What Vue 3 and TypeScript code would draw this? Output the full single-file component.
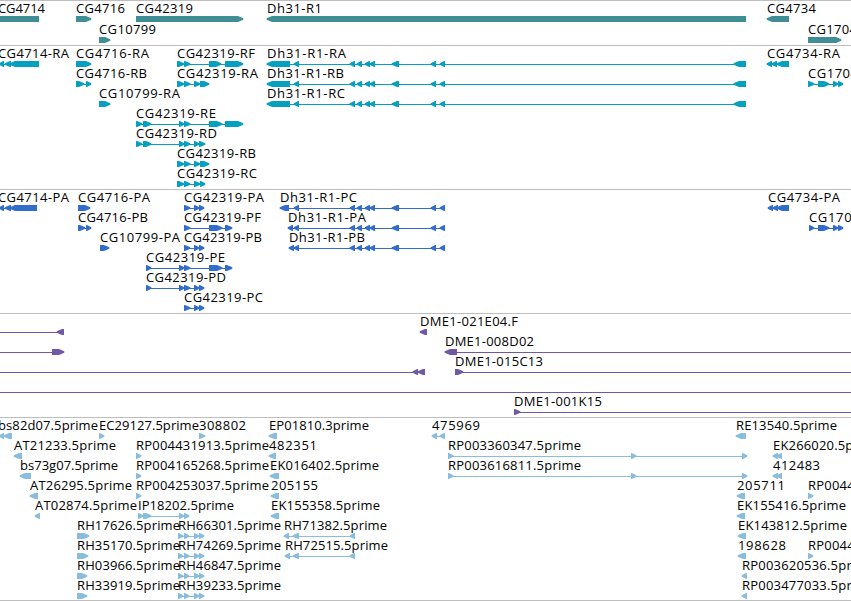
<script setup lang="ts">
type Feature = {
  label: string
  x: number
  y: number
  width?: number
  dir: 1 | -1
  blocks: number[][]
  line?: number[]
}
type Track = { id: string; height: number; color: string; features: Feature[] }

const f = (label: string, x: number, y: number, width: number, dir: 1 | -1, blocks: number[][], line?: number[]): Feature =>
  ({ label, x, y, width, dir, blocks, line })

const dhExons = [[350, 355], [357, 362], [365, 370], [370, 375], [392, 399], [431, 436], [440, 445]]
const dhRna = [[267, 290], [294, 299], ...dhExons, [734, 746]]
const refRna = [[177, 184], [184, 190], [209, 221], [225, 243]]
const shortRna = [[177, 184], [184, 190], [194, 200], [200, 209]]
const tinyRna = [[177, 184], [184, 190], [194, 200], [200, 205]]
const rhExons = [[178, 183], [184, 189], [194, 199], [199, 204]]

const tracks: Track[] = [
  {
    id: 'gene', height: 45, color: '#3f8e95', features: [
      f('CG4714', -2, 13, 47, -1, [[-6, 39]]),
      f('CG4716', 76, 13, 49, 1, [[76, 91]]),
      f('CG42319', 136, 13, 57, 1, [[136, 243]]),
      f('CG10799', 99, 34, 57, 1, [[99, 110]]),
      f('Dh31-R1', 267, 13, 55, -1, [[267, 746]]),
      f('CG4734', 767, 13, 49, -1, [[767, 789]]),
      f('CG1704', 808, 34, 49, 1, [[808, 841]]),
    ],
  },
  {
    id: 'mrna', height: 144, color: '#059fc0', features: [
      f('CG4714-RA', -2, 13, 71, -1, [[-1, 4], [5, 11], [10, 39]]),
      f('CG4716-RA', 76, 13, 73, 1, [[76, 91]]),
      f('CG4716-RB', 76, 33, 71, 1, [[76, 84], [86, 91]]),
      f('CG10799-RA', 99, 53, 81, 1, [[99, 110]]),
      f('CG42319-RF', 177, 13, 78, 1, refRna),
      f('CG42319-RA', 177, 33, 81, 1, shortRna),
      f('CG42319-RE', 136, 73, 80, 1, [[136, 142], [143, 151], [179, 184], [184, 190], [209, 222], [225, 243]]),
      f('CG42319-RD', 136, 93, 81, 1, [[136, 142], [143, 151], [179, 184], [184, 190], [194, 199], [199, 205]]),
      f('CG42319-RB', 177, 113, 79, 1, shortRna),
      f('CG42319-RC', 177, 133, 80, 1, tinyRna),
      f('Dh31-R1-RA', 267, 13, 79, -1, dhRna),
      f('Dh31-R1-RB', 267, 33, 77, -1, dhRna),
      f('Dh31-R1-RC', 267, 53, 78, -1, dhRna),
      f('CG4734-RA', 767, 13, 73, -1, [[767, 772], [772, 777], [777, 789]]),
      f('CG1704-RA', 808, 33, 72, 1, [[808, 814], [818, 829], [833, 838], [838, 843]]),
    ],
  },
  {
    id: 'protein', height: 124, color: '#336dcc', features: [
      f('CG4714-PA', -2, 13, 71, -1, [[-1, 4], [5, 11], [10, 37]]),
      f('CG4716-PA', 78, 13, 72, 1, [[78, 90]]),
      f('CG4716-PB', 78, 33, 70, 1, [[78, 85], [86, 91]]),
      f('CG10799-PA', 100, 53, 80, 1, [[100, 109]]),
      f('CG42319-PA', 184, 13, 80, 1, [[184, 190], [194, 199], [199, 204]]),
      f('CG42319-PF', 184, 33, 77, 1, [[184, 190], [209, 222], [225, 232]]),
      f('CG42319-PB', 184, 53, 78, 1, [[184, 190], [194, 199], [199, 204]]),
      f('CG42319-PE', 146, 73, 79, 1, [[146, 151], [179, 184], [184, 190], [209, 222], [225, 232]]),
      f('CG42319-PD', 146, 93, 80, 1, [[146, 151], [179, 184], [184, 190], [194, 199], [199, 204]]),
      f('CG42319-PC', 184, 113, 79, 1, [[184, 190], [194, 199], [199, 204]]),
      f('Dh31-R1-PC', 280, 13, 77, -1, [[280, 289], [294, 299], ...dhExons]),
      f('Dh31-R1-PA', 288, 33, 78, -1, [[288, 293], [294, 299], ...dhExons]),
      f('Dh31-R1-PB', 289, 53, 76, -1, [[289, 294], [294, 299], ...dhExons]),
      f('CG4734-PA', 768, 13, 72, -1, [[768, 773], [773, 778], [777, 789]]),
      f('CG1704-PA', 809, 33, 73, 1, [[809, 814], [818, 829], [833, 838], [838, 843]]),
    ],
  },
  {
    id: 'bac', height: 104, color: '#7158a5', features: [
      f('', 0, 13, 0, -1, [[57, 64]], [0, 64]),
      f('', 0, 33, 0, 1, [[52, 64]], [0, 64]),
      f('', 0, 53, 0, -1, [[413, 418], [418, 425]], [0, 425]),
      f('', 0, 73, 0, 1, [], [0, 851]),
      f('DME1-021E04.F', 420, 13, 98, -1, [[420, 427]]),
      f('DME1-008D02', 445, 33, 89, -1, [[445, 457]], [445, 851]),
      f('DME1-015C13', 455, 53, 88, 1, [[455, 463]], [455, 851]),
      f('DME1-001K15', 514, 93, 88, 1, [[514, 520]], [514, 851]),
    ],
  },
  {
    id: 'est', height: 184, color: '#88bddd', features: [
      f('bs82d07.5prime', -2, 13, 100, -1, [[-1, 4], [4, 12]]),
      f('EC29127.5prime', 99, 13, 100, 1, [[99, 104]]),
      f('308802', 199, 13, 47, 1, [[199, 205]]),
      f('AT21233.5prime', 14, 33, 102, -1, [[14, 22]]),
      f('bs73g07.5prime', 20, 53, 98, -1, [[20, 31]]),
      f('AT26295.5prime', 30, 73, 102, -1, [[30, 38]]),
      f('AT02874.5prime', 35, 93, 102, -1, [[35, 40]]),
      f('RP004431913.5prime', 136, 33, 133, 1, [[136, 141]]),
      f('RP004165268.5prime', 136, 53, 133, 1, [[136, 141]]),
      f('RP004253037.5prime', 136, 73, 133, 1, [[136, 141]]),
      f('IP18202.5prime', 138, 93, 96, 1, [[138, 143], [143, 151], [179, 184], [184, 189]]),
      f('RH17626.5prime', 77, 113, 103, 1, [[77, 89]]),
      f('RH35170.5prime', 77, 133, 103, 1, [[77, 88]]),
      f('RH03966.5prime', 77, 153, 103, 1, [[77, 87]]),
      f('RH33919.5prime', 77, 173, 103, 1, [[77, 87]]),
      f('RH66301.5prime', 178, 113, 103, 1, rhExons),
      f('RH74269.5prime', 178, 133, 103, 1, rhExons),
      f('RH46847.5prime', 178, 153, 103, 1, rhExons),
      f('RH39233.5prime', 178, 173, 103, 1, rhExons),
      f('EP01810.3prime', 269, 13, 100, -1, [[269, 277]]),
      f('482351', 269, 33, 48, -1, [[269, 276]]),
      f('EK016402.5prime', 270, 53, 109, -1, [[270, 279]]),
      f('205155', 271, 73, 47, -1, [[271, 279]]),
      f('EK155358.5prime', 271, 93, 109, -1, [[271, 279]]),
      f('RH71382.5prime', 284, 113, 103, -1, [[284, 289], [293, 299], [350, 355]]),
      f('RH72515.5prime', 285, 133, 103, -1, [[285, 290], [293, 299], [350, 355]]),
      f('475969', 432, 13, 48, -1, [[432, 437], [440, 445]]),
      f('RP003360347.5prime', 448, 33, 133, 1, [[448, 453], [631, 636], [742, 747]]),
      f('RP003616811.5prime', 448, 53, 133, 1, [[448, 453], [631, 636], [742, 747]]),
      f('RE13540.5prime', 736, 13, 101, -1, [[736, 746]]),
      f('EK266020.5prime', 773, 33, 109, -1, [[773, 778], [777, 782]]),
      f('412483', 773, 53, 47, -1, [[773, 778], [777, 782]]),
      f('205711', 737, 73, 48, -1, [[737, 745]]),
      f('RP004417032.5prime', 808, 73, 133, 1, [[808, 813]]),
      f('EK155416.5prime', 737, 93, 109, -1, [[737, 745]]),
      f('EK143812.5prime', 738, 113, 109, -1, [[738, 746]]),
      f('198628', 738, 133, 48, -1, [[738, 746]]),
      f('RP004417911.5prime', 808, 133, 133, 1, [[808, 813]]),
      f('RP003620536.5prime', 742, 153, 133, -1, [[742, 747]]),
      f('RP003477033.5prime', 742, 173, 133, -1, [[742, 747]]),
    ],
  },
]

// A block ends in a short tapered head that points along its strand.
function shape([a, b]: number[], y: number, dir: 1 | -1): string {
  const head = Math.min(5, b - a - 0.8)
  return dir === 1
    ? `M${a} ${y}H${b - head}L${b + 0.3} ${y + 2.3}V${y + 3.7}L${b - head} ${y + 6}H${a}Z`
    : `M${b} ${y}H${a + head}L${a - 0.3} ${y + 2.3}V${y + 3.7}L${a + head} ${y + 6}H${b}Z`
}
function span(feature: Feature): number[] {
  if (feature.line) return feature.line
  return [feature.blocks[0][0], feature.blocks[feature.blocks.length - 1][1]]
}
</script>

<template>
  <main class="browser">
    <section v-for="track in tracks" :key="track.id" class="track">
      <svg :width="851" :height="track.height - 1" :viewBox="`0 1 851 ${track.height - 1}`">
        <g v-for="(item, i) in track.features" :key="i" :fill="track.color">
          <rect v-if="item.line || item.blocks.length > 1" :x="span(item)[0]" :y="item.y + 6" :width="span(item)[1] - span(item)[0]" height="1" />
          <path v-for="(block, b) in item.blocks" :key="b" :d="shape(block, item.y + 3, item.dir)" />
          <text v-if="item.label" :x="item.x" :y="item.y" :textLength="item.width" class="label">{{ item.label }}</text>
        </g>
      </svg>
    </section>
  </main>
</template>

<style>
body {
  background: #fff;
  overflow: hidden;
}
</style>

<style scoped>
.browser {
  width: 851px;
  height: 601px;
  box-sizing: border-box;
  border-bottom: 1px solid #bebebe;
  overflow: hidden;
}
.track {
  border-top: 1px solid #bebebe;
}
.track svg {
  display: block;
}
.label {
  fill: #000;
  font-family: "Open Sans", "Noto Sans", sans-serif;
  font-size: 13px;
  font-weight: 400;
}
</style>
